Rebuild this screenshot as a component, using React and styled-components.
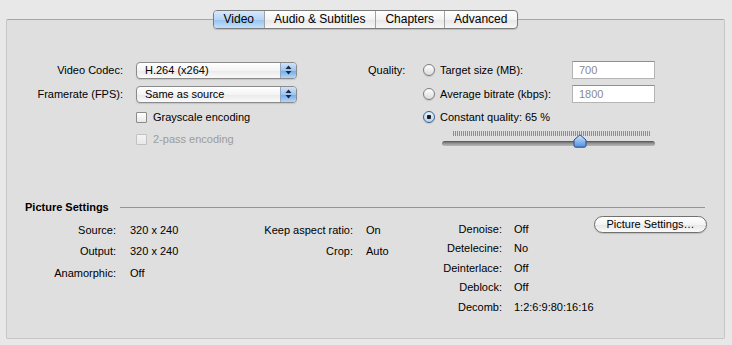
import styled, { createGlobalStyle } from 'styled-components'

const Global = createGlobalStyle`
  html, body {
    margin: 0;
    padding: 0;
    background: #e8e8e8;
  }
  body {
    font-family: "Liberation Sans", Arial, sans-serif;
    font-size: 11px;
    color: #000;
  }
`

const Window = styled.div`
  width: 732px;
  height: 345px;
  box-sizing: border-box;
  padding: 10px 7px 0 6px;
`

const TabBar = styled.div`
  display: flex;
  justify-content: center;
  position: relative;
  z-index: 1;
  margin-bottom: -10px;
`

const Segmented = styled.div`
  display: flex;
  height: 17px;
  border: 1px solid #7b7b7b;
  border-radius: 4px;
  overflow: hidden;
  box-shadow: 0 1px 1px rgba(0,0,0,0.15);
  background: linear-gradient(#ffffff, #f3f3f3 50%, #e6e6e6 51%, #f7f7f7);
`

const Tab = styled.div`
  padding: 0 9.5px;
  font-size: 12px;
  line-height: 17px;
  border-left: 1px solid #a2a2a2;
  background: ${p => p.$active
    ? 'linear-gradient(#d6e8fb, #b6d5f6 50%, #97c2f0 51%, #c4e0fb)'
    : 'transparent'};
  &:first-child { border-left: none; }
`

const Panel = styled.div`
  height: 320px;
  box-sizing: border-box;
  background: #dfdfdf;
  border: 1px solid #c6c6c6;
  border-top-color: #a6a6a6;
  border-radius: 2px;
  padding-top: 38px;
`

const TopSection = styled.div`
  display: flex;
  column-gap: 71px;
`

const FormGrid = styled.div`
  display: grid;
  grid-template-columns: 116px 161px;
  grid-template-rows: 24px 24px 22px 22px;
  column-gap: 13px;
  align-items: center;
`

const Label = styled.div`
  text-align: right;
  white-space: nowrap;
`

const Popup = styled.div`
  display: flex;
  height: 17px;
  box-sizing: border-box;
  border: 1px solid #8a8a8a;
  border-radius: 4px;
  background: linear-gradient(#ffffff, #f4f4f4 50%, #e9e9e9 51%, #fafafa);
  box-shadow: 0 1px 1px rgba(0,0,0,0.12);
  overflow: hidden;
`

const PopupText = styled.span`
  flex: 1;
  padding-left: 8px;
  line-height: 15px;
`

const PopupArrows = styled.span`
  width: 15px;
  display: flex;
  align-items: center;
  justify-content: center;
  border-left: 1px solid #8fa7c6;
  background: linear-gradient(#cfe3f9, #9cc4ef 50%, #74a9e8 51%, #b4d6f8);
`

const Check = styled.label`
  grid-column: 2;
  display: flex;
  align-items: center;
  gap: 6px;
  color: ${p => (p.$disabled ? '#9c9c9c' : '#000')};
`

const Box = styled.span`
  width: 11px;
  height: 11px;
  box-sizing: border-box;
  border: 1px solid ${p => (p.$disabled ? '#c2c2c2' : '#8a8a8a')};
  border-radius: 1px;
  background: ${p => (p.$disabled
    ? 'linear-gradient(#f4f4f4, #e8e8e8)'
    : 'linear-gradient(#ffffff, #e9e9e9)')};
`

const QualityGrid = styled.div`
  display: grid;
  grid-template-columns: 55px 149px 83px;
  grid-template-rows: 24px 24px 22px auto;
  align-items: center;
`

const QualityLabel = styled.div`
  grid-column: 1;
`

const Option = styled.label`
  grid-column: 2;
  display: flex;
  align-items: center;
  gap: 5px;
  white-space: nowrap;
`

const Radio = styled.span`
  width: 12px;
  height: 12px;
  box-sizing: border-box;
  border-radius: 50%;
  border: 1px solid ${p => (p.$on ? '#3d5f8e' : '#7d7d7d')};
  background: ${p => (p.$on
    ? 'radial-gradient(circle at 50% 50%, #1a1a1a 0 2px, transparent 2.5px), linear-gradient(#e6f0fb, #b8d4f3)'
    : 'linear-gradient(#ffffff, #dcdcdc)')};
  box-shadow: 0 1px 1px rgba(0,0,0,0.12);
`

const Field = styled.div`
  grid-column: 3;
  height: 18px;
  box-sizing: border-box;
  border: 1px solid #b4b4b4;
  border-top-color: #8f8f8f;
  background: #fff;
  color: #8a8a8a;
  padding-left: 6px;
  line-height: 16px;
`

const Slider = styled.div`
  grid-column: 2 / 4;
  position: relative;
  margin: 3px 0 0 19px;
  width: 213px;
  height: 19px;
`

const Ticks = styled.div`
  margin: 0 5px 0 11px;
  height: 5px;
  background: repeating-linear-gradient(to right, #8d8d8d 0 1px, transparent 1px 2px);
`

const Track = styled.div`
  margin-top: 5px;
  height: 5px;
  border-radius: 3px;
  background: linear-gradient(#4f4f4f, #8d8d8d 40%, #b9b9b9);
`

const Knob = styled.svg`
  position: absolute;
  top: 3px;
  transform: translateX(-50%);
`

const SectionHeading = styled.div`
  display: flex;
  align-items: center;
  margin-top: 50px;
  padding-left: 18px;
  height: 14px;
  font-weight: bold;
`

const Rule = styled.div`
  flex: 1;
  height: 1px;
  margin: 0 19px 0 11px;
  background: #959595;
`

const InfoRow = styled.div`
  display: flex;
  align-items: flex-start;
  margin-top: 5px;
  padding-left: 33px;
`

const InfoBlock = styled.div`
  width: ${p => p.$width}px;
  display: grid;
  grid-template-columns: ${p => p.$label}px auto;
  grid-auto-rows: ${p => p.$row}px;
  column-gap: ${p => p.$gap}px;
  align-items: center;
`

const PushButton = styled.div`
  margin-top: -3px;
  width: 113px;
  height: 17px;
  box-sizing: border-box;
  border: 1px solid #717171;
  border-radius: 9px;
  background: linear-gradient(#ffffff, #f3f3f3 50%, #e6e6e6 51%, #fafafa);
  box-shadow: 0 1px 1px rgba(0,0,0,0.15);
  text-align: center;
  line-height: 15px;
`

function Arrows() {
  return (
    <svg width="7" height="10" viewBox="0 0 7 10">
      <path d="M3.5 0.5 L6.5 4 L0.5 4 Z" fill="#1d2a44" />
      <path d="M3.5 9.5 L6.5 6 L0.5 6 Z" fill="#1d2a44" />
    </svg>
  )
}

function PopupButton({ children }) {
  return (
    <Popup>
      <PopupText>{children}</PopupText>
      <PopupArrows><Arrows /></PopupArrows>
    </Popup>
  )
}

const tabs = ['Video', 'Audio & Subtitles', 'Chapters', 'Advanced']

const col1 = [['Source:', '320 x 240'], ['Output:', '320 x 240'], ['Anamorphic:', 'Off']]
const col2 = [['Keep aspect ratio:', 'On'], ['Crop:', 'Auto']]
const col3 = [
  ['Denoise:', 'Off'],
  ['Detelecine:', 'No'],
  ['Deinterlace:', 'Off'],
  ['Deblock:', 'Off'],
  ['Decomb:', '1:2:6:9:80:16:16'],
]

function Pairs({ rows }) {
  return rows.map(([k, v]) => [
    <Label key={k}>{k}</Label>,
    <div key={k + 'v'}>{v}</div>,
  ])
}

export default function App() {
  return (
    <>
      <Global />
      <Window>
        <TabBar>
          <Segmented>
            {tabs.map(t => (
              <Tab key={t} $active={t === 'Video'}>{t}</Tab>
            ))}
          </Segmented>
        </TabBar>
        <Panel>
          <TopSection>
            <FormGrid>
              <Label>Video Codec:</Label>
              <PopupButton>H.264 (x264)</PopupButton>
              <Label>Framerate (FPS):</Label>
              <PopupButton>Same as source</PopupButton>
              <Check><Box />Grayscale encoding</Check>
              <Check $disabled><Box $disabled />2-pass encoding</Check>
            </FormGrid>
            <QualityGrid>
              <QualityLabel>Quality:</QualityLabel>
              <Option><Radio />Target size (MB):</Option>
              <Field>700</Field>
              <Option><Radio />Average bitrate (kbps):</Option>
              <Field>1800</Field>
              <Option><Radio $on />Constant quality: 65 %</Option>
              <Slider>
                <Ticks />
                <Track />
                <Knob width="14" height="14" viewBox="0 0 14 14" style={{ left: '65%' }}>
                  <defs>
                    <linearGradient id="knob" x1="0" y1="0" x2="0" y2="1">
                      <stop offset="0" stopColor="#d9eafc" />
                      <stop offset="0.5" stopColor="#8dbcf0" />
                      <stop offset="1" stopColor="#4f8fe0" />
                    </linearGradient>
                  </defs>
                  <path d="M7 0.8 L13 6 L13 11.5 Q13 13.2 11.3 13.2 L2.7 13.2 Q1 13.2 1 11.5 L1 6 Z" fill="url(#knob)" stroke="#2b4c80" strokeWidth="1" />
                </Knob>
              </Slider>
            </QualityGrid>
          </TopSection>
          <SectionHeading>
            <span>Picture Settings</span>
            <Rule />
          </SectionHeading>
          <InfoRow>
            <InfoBlock $width={210} $label={76} $gap={14} $row={21.5}>
              <Pairs rows={col1} />
            </InfoBlock>
            <InfoBlock $width={180} $label={103} $gap={13} $row={21.5}>
              <Pairs rows={col2} />
            </InfoBlock>
            <InfoBlock $width={164} $label={72} $gap={12} $row={19.5}>
              <Pairs rows={col3} />
            </InfoBlock>
            <PushButton>Picture Settings…</PushButton>
          </InfoRow>
        </Panel>
      </Window>
    </>
  )
}
